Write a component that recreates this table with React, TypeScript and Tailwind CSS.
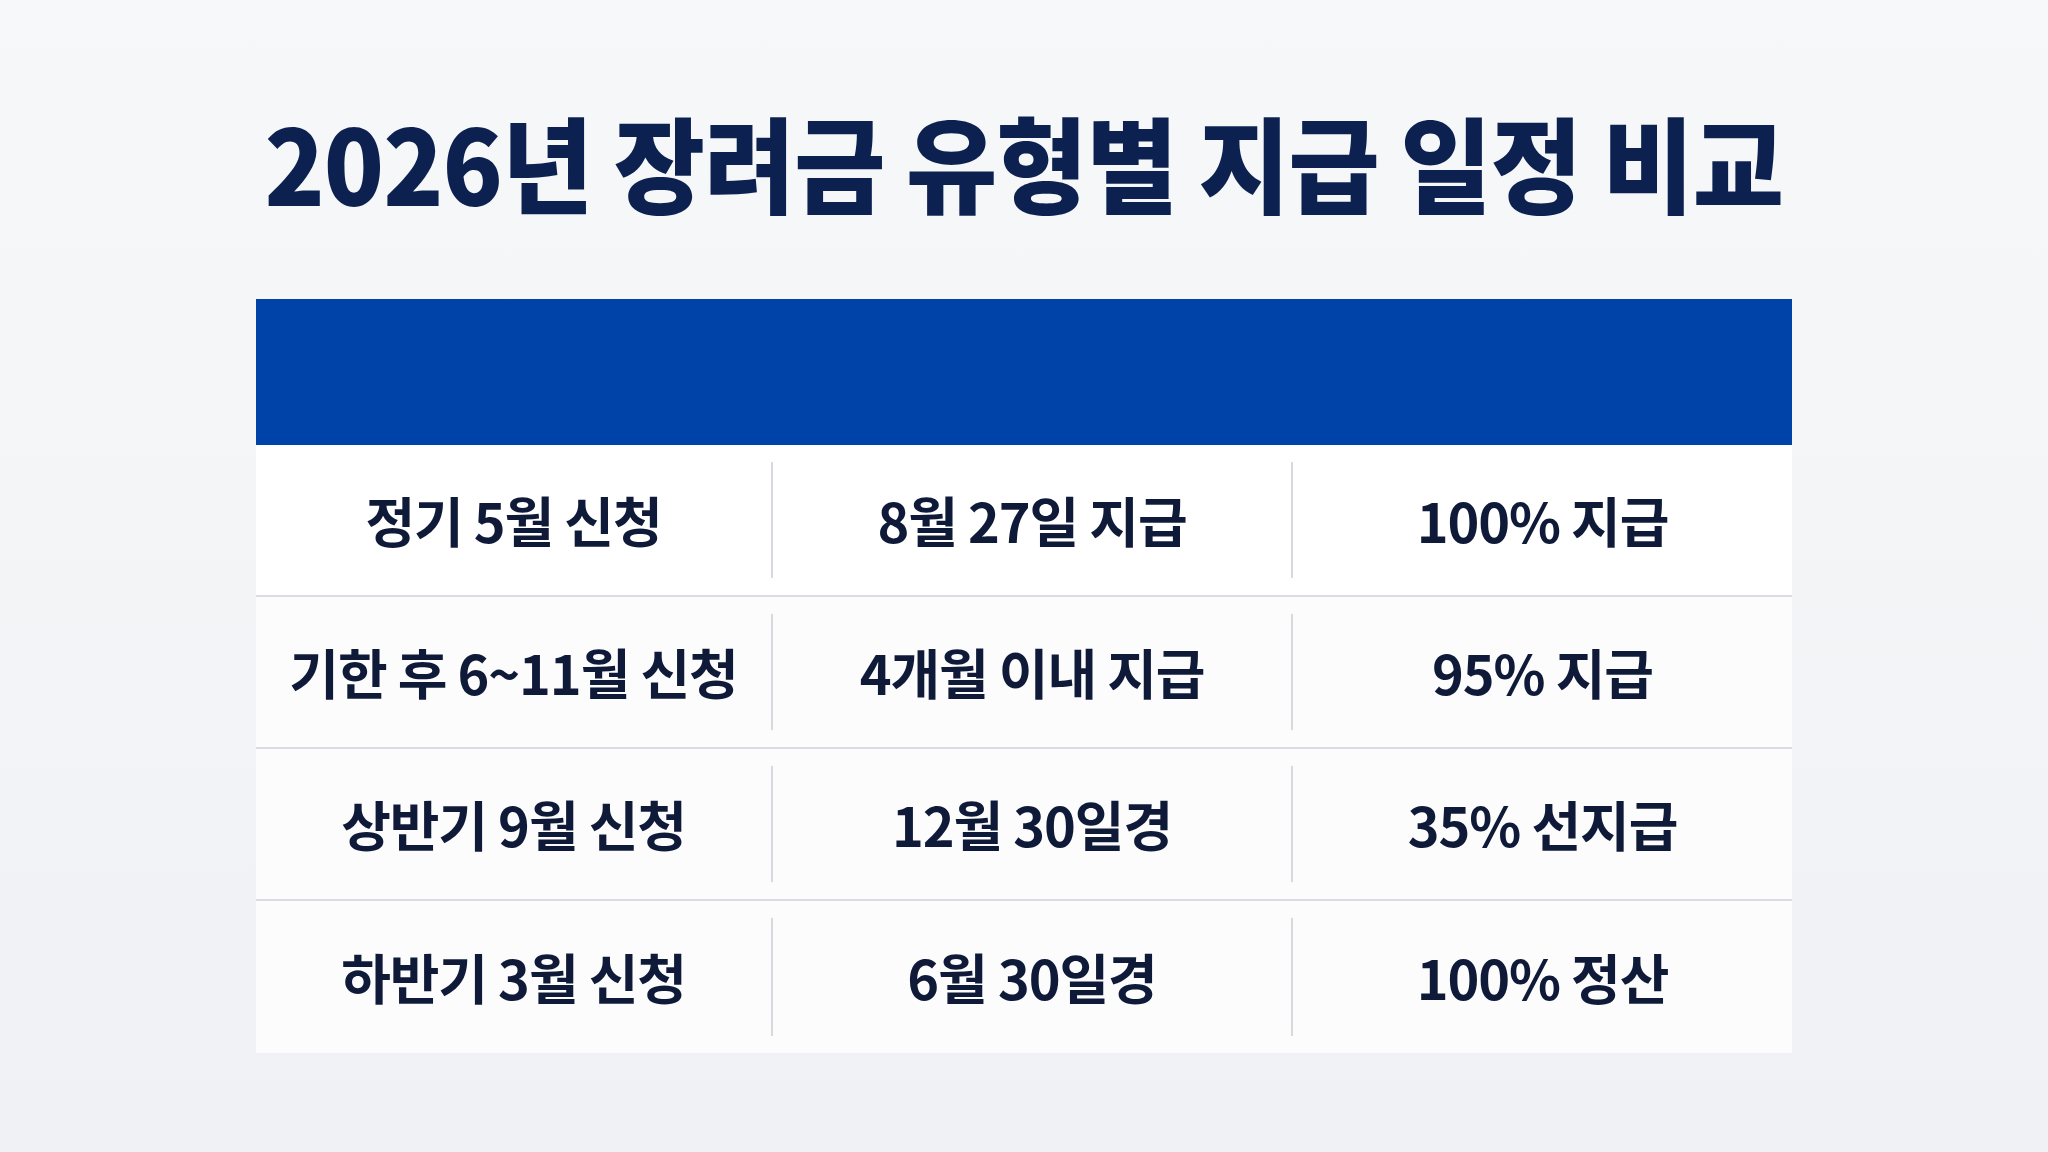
const rows = [
  ["정기 5월 신청", "8월 27일 지급", "100% 지급"],
  ["기한 후 6~11월 신청", "4개월 이내 지급", "95% 지급"],
  ["상반기 9월 신청", "12월 30일경", "35% 선지급"],
  ["하반기 3월 신청", "6월 30일경", "100% 정산"],
];

const font = "font-['Noto_Sans_CJK_KR','Noto_Sans_CJK_SC',sans-serif]";

function Cell({ text, width }: { text: string; width: string }) {
  return (
    <div className={`flex items-center justify-center ${width}`}>
      <span className="inline-block text-[54px] font-bold leading-none tracking-[-0.02em] text-[#0f1a38]">
        {text}
      </span>
    </div>
  );
}

export default function App() {
  return (
    <div
      className={`min-h-[1152px] w-full bg-gradient-to-b from-[#f7f8fa] to-[#eff1f4] ${font}`}
    >
      {/* Title */}
      <div className="flex justify-center pt-[109px]">
        <h1 className="inline-block scale-x-[0.953] text-[104px] font-black leading-none tracking-[-0.01em] text-[#0c2150]">
          2026년 장려금 유형별 지급 일정 비교
        </h1>
      </div>

      {/* Table */}
      <div className="mx-auto mt-[86px] w-[1536px]">
        <div className="h-[146px] bg-[#0043a8]" />
        {rows.map((row, i) => (
          <div
            key={i}
            className={`flex h-[152px] ${
              i === 0 ? "bg-white" : "bg-[#fcfcfd]"
            } ${i < rows.length - 1 ? "border-b-2 border-[#d9dce1]" : ""}`}
          >
            <Cell text={row[0]} width="w-[515px]" />
            <div className="my-[17px] w-[2px] bg-[#d6d9de]" />
            <Cell text={row[1]} width="w-[518px]" />
            <div className="my-[17px] w-[2px] bg-[#d6d9de]" />
            <Cell text={row[2]} width="flex-1" />
          </div>
        ))}
      </div>
    </div>
  );
}
